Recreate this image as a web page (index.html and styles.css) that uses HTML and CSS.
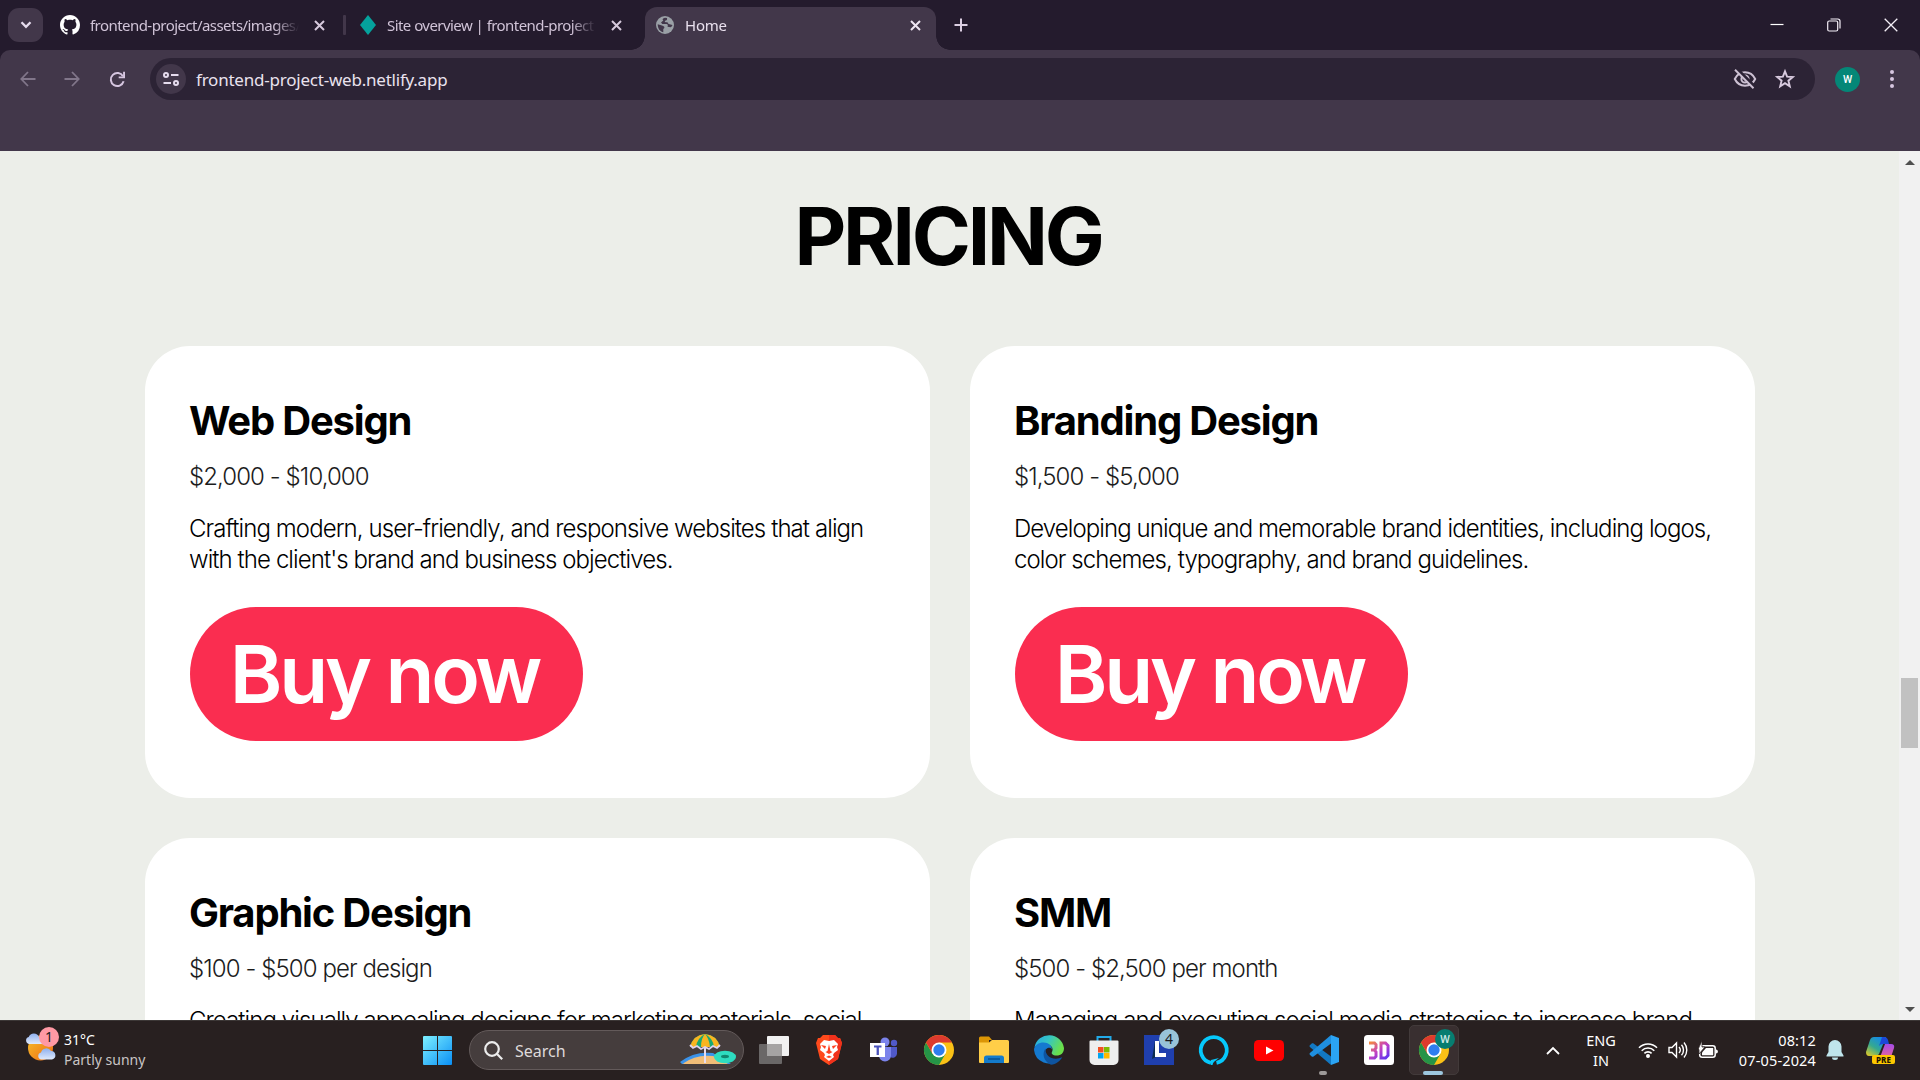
FILE: index.html
```html
<!DOCTYPE html>
<html lang="en">
<head>
<meta charset="utf-8">
<title>Home</title>
<link rel="stylesheet" href="styles.css">
</head>
<body>
<header class="tabstrip">
  <button class="tab-search"><svg width="12" height="8" viewBox="0 0 12 8"><path d="M1.5 1.2 6 5.8l4.500-4.600" fill="none" stroke="#e6dcee" stroke-width="2.300"/></svg></button>
  <div class="tab tab-one">
    <svg class="favicon" width="20" height="20" viewBox="0 0 16 16"><path fill="#fff" d="M8 0C3.580 0 0 3.580 0 8c0 3.540 2.290 6.530 5.470 7.590.4.070.55-.17.55-.38 0-.19-.01-.82-.01-1.490-2.010.37-2.530-.49-2.690-.94-.09-.23-.48-.94-.82-1.130-.28-.15-.68-.52-.01-.53.63-.01 1.080.58 1.230.82.72 1.210 1.870.87 2.330.66.07-.52.28-.87.51-1.070-1.780-.2-3.640-.89-3.640-3.950 0-.87.31-1.590.82-2.150-.08-.2-.36-1.020.08-2.120 0 0 .67-.21 2.200.82.64-.18 1.320-.27 2-.27s1.360.09 2 .27c1.530-1.040 2.200-.82 2.200-.82.44 1.100.16 1.920.08 2.120.51.56.82 1.270.82 2.150 0 3.070-1.870 3.750-3.650 3.950.29.25.54.73.54 1.480 0 1.070-.01 1.930-.01 2.200 0 .21.15.46.55.38A8.010 8.010 0 0 0 16 8c0-4.420-3.580-8-8-8Z"/></svg>
    <span class="tab-label">frontend-project/assets/images/</span>
    <svg class="close" width="11" height="11" viewBox="0 0 11 11"><path d="m1 1 9 9m0-9-9 9"/></svg>
  </div>
  <i class="tab-divider"></i>
  <div class="tab tab-two">
    <svg class="favicon" width="20" height="20" viewBox="0 0 20 20"><path fill="#05a29c" d="m10 0 8 10-8 10L2 10Z"/></svg>
    <span class="tab-label">Site overview | frontend-project</span>
    <svg class="close" width="11" height="11" viewBox="0 0 11 11"><path d="m1 1 9 9m0-9-9 9"/></svg>
  </div>
  <div class="tab tab-active">
    <svg class="favicon" width="18" height="18" viewBox="0 0 18 18"><circle cx="9" cy="9" r="9" fill="#9aa0a6"/><path fill="#42374a" d="M1.700 8.200 6 9.500c1.800.4 2.600 1.200 2.300 2.500l-1 1.100v3.200C4 15.500 1.700 12.600 1.700 8.200ZM9 1.700C6.600 2.300 6 3.500 7.300 4.600L5 6.500l1.300 1.600h4.200c1.500 0 1.600 1.500 1 2.700l3.200.4c1-.5 1.500-1.300 1.700-2.200l-3.700-1c-1-.3-.4-1.700-1.700-1.700H9.500c-1.300-.5-.6-1.600.3-1.700 1.200-.2 1.500-1 1.200-2.600Z"/></svg>
    <span class="tab-label">Home</span>
    <svg class="close" width="11" height="11" viewBox="0 0 11 11"><path d="m1 1 9 9m0-9-9 9"/></svg>
  </div>
  <svg class="new-tab" width="14" height="14" viewBox="0 0 14 14"><path d="M7 .5v13M.5 7h13" stroke="#dccfe2" stroke-width="2"/></svg>
  <div class="window-controls">
    <svg width="14" height="14" viewBox="0 0 14 14"><path d="M.5 6.500h13" stroke="#fff" stroke-width="1.200"/></svg>
    <svg width="14" height="14" viewBox="0 0 14 14" fill="none" stroke="#f4eff7" stroke-width="1.200"><rect x=".7" y="3" width="10" height="10" rx="1.500"/><path d="M3.500 1h7.300a2.200 2.200 0 0 1 2.200 2.200v7.300"/></svg>
    <svg width="14" height="14" viewBox="0 0 14 14"><path d="m.7.7 12.600 12.600m0-12.600L.7 13.300" stroke="#f4eff7" stroke-width="1.300"/></svg>
  </div>
</header>

<nav class="toolbar">
  <div class="toolbar-row">
    <svg class="nav-back" width="16" height="16" viewBox="0 0 16 16"><path d="M15.500 8H1.500M8 1 1.300 8 8 15" fill="none" stroke="#81768a" stroke-width="1.800"/></svg>
    <svg class="nav-forward" width="16" height="16" viewBox="0 0 16 16"><path d="M.5 8h14M8 1l6.700 7L8 15" fill="none" stroke="#81768a" stroke-width="1.800"/></svg>
    <svg class="nav-reload" width="17" height="17" viewBox="0 0 17 17"><path d="M14.600 10.300A6.500 6.500 0 1 1 14 5.300" fill="none" stroke="#d6c6e0" stroke-width="2"/><path d="M16 .8v6.400H9.700V5.400h4.400V.8Z" fill="#d6c6e0"/></svg>
    <div class="omnibox">
      <span class="site-info"><svg width="16" height="14" viewBox="0 0 16 14" fill="none" stroke="#e6dcee" stroke-width="2"><circle cx="3" cy="3" r="2"/><path d="M8 3h7.500M.5 11H8"/><circle cx="13" cy="11" r="2"/></svg></span>
      <span class="url">frontend-project-web.netlify.app</span>
      <svg class="eye" width="24" height="22" viewBox="0 0 24 22" fill="none" stroke="#cdc1d3" stroke-width="2"><path d="M1.800 11C4 6.500 7.500 4.300 12 4.300s8 2.200 10.200 6.700c-2.200 4.500-5.700 6.700-10.200 6.700S4 15.500 1.800 11Z"/><circle cx="12" cy="11" r="3.600"/><path d="M4 .8 22.500 19.300" stroke="#2c2335" stroke-width="3"/><path d="m2 1.700 18.500 18.500"/></svg>
      <svg class="star" width="20" height="20" viewBox="0 0 20 20"><path d="m10 2.300 2.100 5.300 5.700.4-4.400 3.700 1.400 5.600-4.800-3.100-4.800 3.100 1.400-5.600L2.200 8l5.700-.4Z" fill="none" stroke="#d8cade" stroke-width="1.900"/></svg>
    </div>
    <span class="profile">W</span>
    <svg class="kebab" width="4" height="18" viewBox="0 0 4 18" fill="#d6c6e0"><circle cx="2" cy="2" r="2"/><circle cx="2" cy="9" r="2"/><circle cx="2" cy="16" r="2"/></svg>
  </div>
</nav>

<div class="viewport">
  <main class="pricing">
    <h1 class="pricing-title">PRICING</h1>
    <section class="plans">
      <article class="plan">
        <h2 class="plan-name">Web Design</h2>
        <p class="plan-price">$2,000 - $10,000</p>
        <p class="plan-text">Crafting modern, user-friendly, and responsive websites that align<br>with the client's brand and business objectives.</p>
        <a class="buy">Buy now</a>
      </article>
      <article class="plan">
        <h2 class="plan-name">Branding Design</h2>
        <p class="plan-price">$1,500 - $5,000</p>
        <p class="plan-text">Developing unique and memorable brand identities, including logos,<br>color schemes, typography, and brand guidelines.</p>
        <a class="buy">Buy now</a>
      </article>
      <article class="plan">
        <h2 class="plan-name">Graphic Design</h2>
        <p class="plan-price">$100 - $500 per design</p>
        <p class="plan-text">Creating visually appealing designs for marketing materials, social</p>
      </article>
      <article class="plan">
        <h2 class="plan-name">SMM</h2>
        <p class="plan-price">$500 - $2,500 per month</p>
        <p class="plan-text">Managing and executing social media strategies to increase brand</p>
      </article>
    </section>
  </main>
  <aside class="scrollbar">
    <svg width="10" height="5" viewBox="0 0 10 5"><path d="M0 5 5 0l5 5Z" fill="#505050"/></svg>
    <i class="thumb"></i>
    <svg width="10" height="5" viewBox="0 0 10 5"><path d="m0 0 5 5 5-5Z" fill="#505050"/></svg>
  </aside>
</div>

<footer class="taskbar">
  <div class="weather">
    <div class="weather-icon">
      <svg width="32" height="30" viewBox="0 0 32 30"><defs><linearGradient id="sun" x1="0" y1="0" x2="1" y2="1"><stop offset="0" stop-color="#f6c02a"/><stop offset="1" stop-color="#ee6a14"/></linearGradient><linearGradient id="cloud" x1="0" y1="0" x2="0" y2="1"><stop offset="0" stop-color="#8fb0ee"/><stop offset="1" stop-color="#dfeafc"/></linearGradient></defs><circle cx="15.500" cy="15" r="12.500" fill="url(#sun)"/><path d="M4 11a3.600 3.600 0 0 1-.3-7A5.500 5.500 0 0 1 14 4l4 7Z" fill="url(#cloud)"/><path d="M16 26.500a3.600 3.600 0 0 1 0-7 5.500 5.500 0 0 1 10-1.500 4.300 4.300 0 0 1 1 8.500Z" fill="url(#cloud)"/></svg>
      <span class="badge weather-badge">1</span>
    </div>
    <div class="weather-text"><span class="temp">31°C</span><span class="cond">Partly sunny</span></div>
  </div>

  <div class="start">
    <svg width="29" height="29" viewBox="0 0 29 29"><defs><linearGradient id="win" x1="0" y1="0" x2="1" y2="1"><stop offset="0" stop-color="#7df0ff"/><stop offset="1" stop-color="#0a8ff5"/></linearGradient></defs><path d="M1 0h13v14H0V1a1 1 0 0 1 1-1Zm14 0h13a1 1 0 0 1 1 1v13H15ZM0 15h14v14H1a1 1 0 0 1-1-1Zm15 0h14v13a1 1 0 0 1-1 1H15Z" fill="url(#win)"/></svg>
  </div>
  <div class="search">
    <svg width="19" height="19" viewBox="0 0 19 19" fill="none" stroke="#ececec" stroke-width="2.200"><circle cx="8" cy="8" r="6.800"/><path d="m12.800 12.800 5.400 5.400"/></svg>
    <span class="search-label">Search</span>
    <svg class="beach" width="56" height="32" viewBox="0 0 56 32"><path d="M0 28Q14 17 33 19l18 11H2Z" fill="#3b93ea"/><path d="M3 29.500Q16 20 33 22l15 8H4Z" fill="#f0bd78"/><path d="M24 5h2v24h-2z" fill="#e6dced"/><path d="M10 13Q13 1 25 0q12 1 15 13Z" fill="#19a974"/><path d="M10 13Q13 1 25 0q-8 4-9 13Zm11 0Q21 4 25 0q4 4 5 13Zm19 0Q37 1 25 0q8 4 9 13Z" fill="#f9b520"/><path d="m10 11 3 3 4-2 4 3 4-2 4 2 4-3 4 2 3-3" fill="none" stroke="#ded3f0" stroke-width="1.800"/><ellipse cx="45" cy="23" rx="11" ry="6.200" fill="#2edcc0"/><ellipse cx="45" cy="22.500" rx="4" ry="1.700" fill="#11866f"/></svg>
  </div>

  <div class="apps">
    <div class="app"><svg width="30" height="30" viewBox="0 0 30 30"><rect x="8" y="1" width="22" height="20" rx="1" fill="#f1f1f1"/><rect y="9" width="23" height="20" rx="1" fill="#6a6767"/><rect x="8" y="9" width="15" height="12" fill="#a5a3a3"/></svg></div>
    <div class="app"><svg width="26" height="30" viewBox="0 0 26 30"><path d="m7 0-3 3H2L0 8l1 4 3 12 9 6 9-6 3-12 1-4-2-5h-2l-3-3Z" fill="#ff4a1c"/><path d="M13 0h6l3 3h2l2 5-1 4-3 12-9 6Z" fill="#f1311b"/><path d="m8 5 5 1 5-1 4 4-1 3 1 3-4 3-1 2 1 2-5 4-5-4 1-2-1-2-4-3 1-3-1-3Z" fill="#fff"/><path d="m5 10 5 1-1 3Zm16 0-5 1 1 3Zm-8-1 1.500 7 2 1-3.500 2-3.500-2 2-1ZM10 22l3-1.500 3 1.500-3 1Z" fill="#ff4120"/></svg></div>
    <div class="app"><svg width="28" height="26" viewBox="0 0 28 26"><circle cx="15" cy="5" r="4.500" fill="#7b83eb"/><circle cx="24" cy="6" r="3.200" fill="#5059c9"/><path d="M19 10h8v7a4.500 4.500 0 0 1-7 3Z" fill="#5059c9"/><path d="M9 10h12v8.500a6 6 0 0 1-12 0Z" fill="#7b83eb"/><path d="M0 6h15v14H0z" fill="#fff"/><path d="M4 8.500h7.500v2H8.900V18H6.600v-7.500H4Z" fill="#4b53bc"/></svg></div>
    <div class="app"><svg width="30" height="30" viewBox="0 0 30 30"><g id="chrome"><circle cx="15" cy="15" r="15" fill="#fbc116"/><path d="M2 7.500A15 15 0 0 0 15 30l6.500-11.300L8.500 18.700Z" fill="#259447"/><path d="M2 7.500A15 15 0 0 1 28 7.500H15L8.500 18.700Z" fill="#dd3a2e"/><circle cx="15" cy="15" r="7.500" fill="#fff"/><circle cx="15" cy="15" r="5.700" fill="#2f7def"/></g></svg></div>
    <div class="app"><svg width="30" height="28" viewBox="0 0 30 28"><path d="M0 2a1.500 1.500 0 0 1 1.500-1.500h8.500L13 4h-3v6H0Z" fill="#dc9605"/><path d="M0 6.500h10L13 4h15.500A1.500 1.500 0 0 1 30 5.500V26a1 1 0 0 1-1 1H1a1 1 0 0 1-1-1Z" fill="#ffce48"/><path d="M5 27v-5a2.500 2.500 0 0 1 2.500-2.500h15A2.500 2.500 0 0 1 25 22v5Z" fill="#147bcb"/><path d="M9 23h12" stroke="#07508f" stroke-width="1.500"/></svg></div>
    <div class="app"><svg width="30" height="30" viewBox="0 0 30 30"><defs><linearGradient id="edge" x1="0" y1="0" x2="1" y2=".4"><stop offset="0" stop-color="#25a7e6"/><stop offset=".5" stop-color="#36c6c2"/><stop offset="1" stop-color="#6ae04a"/></linearGradient></defs><path d="M.5 12A15 15 0 0 1 30 13c0 5-3 7.500-7.500 7.500-4 0-5.500-2-4.500-3.500 2-4-1-7.500-6-7.500S2 11 .5 12Z" fill="url(#edge)"/><path d="M0 15C0 10 5 7.500 9.500 7.500c5 0 8.500 3 8.500 7-1-3-7-2.500-7 3 0 6 6 9.500 14 7A15 15 0 0 1 0 15Z" fill="#1579cf"/><path d="M11.500 13.500C8 18 9 26 17 29.800c5-.5 9-3.500 11.200-7.500C20 26 11 22 11.500 13.500Z" fill="#0e54a0"/></svg></div>
    <div class="app"><svg width="30" height="30" viewBox="0 0 30 30"><path d="M8.500 6V2h13v4" fill="none" stroke="#22aae8" stroke-width="2"/><path d="M.5 6.500a1 1 0 0 1 1-1h27a1 1 0 0 1 1 1V25a5 5 0 0 1-5 5h-19a5 5 0 0 1-5-5Z" fill="#eee"/><path d="M9 12h5.500v5.500H9z" fill="#f25022"/><path d="M15 12h5.500v5.500H15z" fill="#7fba00"/><path d="M9 18h5.500v5.500H9z" fill="#00a4ef"/><path d="M15 18h5.500v5.500H15z" fill="#ffb900"/></svg></div>
    <div class="app"><svg width="30" height="30" viewBox="0 0 30 30"><path d="M0 0h30v30H0z" fill="#1f3fae"/><path d="m11 6-3 18 4-2Z" fill="#0c2d4e"/><path d="M11 6h4v12h7v4H11Z" fill="#fff"/></svg><span class="badge l-badge">4</span></div>
    <div class="app"><svg width="30" height="30" viewBox="0 0 30 30"><path d="M12 27.800A13 13 0 1 1 17.500 27.800" fill="none" stroke="#06c8fb" stroke-width="3.800"/><path d="M12 25v5h1.500C14 27 16 26 20 23l-4 1Z" fill="#06c8fb"/></svg></div>
    <div class="app"><svg width="30" height="21" viewBox="0 0 30 21"><rect width="30" height="21" rx="4.500" fill="#f00"/><path d="m12 6.500 7.500 4-7.500 4Z" fill="#fff"/></svg></div>
    <div class="app"><svg width="30" height="30" viewBox="0 0 30 30"><path d="M3 8.300.6 10.500v1.200L22 30v-8.500L4.200 8.300Z" fill="#1278c2"/><path d="M22 0v8.500L4.200 21.700H3L.6 19.500v-1.200Z" fill="#1f8fdf"/><path d="m22 0 8 3v24l-8 3Z" fill="#2ba4f4"/></svg><i class="running"></i></div>
    <div class="app"><svg width="30" height="30" viewBox="0 0 30 30"><defs><linearGradient id="three" x1="0" y1="0" x2="1" y2="1"><stop offset="0" stop-color="#f58a3c"/><stop offset=".5" stop-color="#c341c4"/><stop offset="1" stop-color="#5a35f2"/></linearGradient></defs><rect width="30" height="30" rx="3.500" fill="#fff"/><path d="M5 8h5.500l1.500 1.500V13l-1.500 2 1.500 2v4.500L10.500 23H5M7 15h3.500M17 8h4.500L24 10.500v10L21.500 23H17Z" fill="none" stroke="url(#three)" stroke-width="3"/></svg></div>
    <div class="app"><div class="app-tile"><svg width="30" height="30" viewBox="0 0 30 30"><use href="#chrome"/></svg></div><span class="badge w-badge">W</span><i class="running running-on"></i></div>
  </div>

  <div class="tray">
    <svg class="chevron" width="14" height="9" viewBox="0 0 14 9"><path d="m1 8 6-6 6 6" fill="none" stroke="#fff" stroke-width="1.800"/></svg>
    <div class="lang"><span>ENG</span><span>IN</span></div>
    <svg class="wifi" width="20" height="16" viewBox="0 0 20 16" fill="none" stroke="#fff" stroke-width="1.600"><path d="M1 5.800a12.500 12.500 0 0 1 18 0M3.700 8.700a8.800 8.800 0 0 1 12.600 0M6.400 11.400a5 5 0 0 1 7.200 0"/><circle cx="10" cy="14" r="1.200" fill="#fff"/></svg>
    <svg class="volume" width="20" height="18" viewBox="0 0 20 18" fill="none" stroke="#fff" stroke-width="1.400"><path d="M1 6.500h3L8.500 2v14L4 11.500H1ZM11 6a4.500 4.500 0 0 1 0 6M13.500 3.700a8 8 0 0 1 0 10.600M16 1.500a11.500 11.500 0 0 1 0 15"/></svg>
    <svg class="battery" width="21" height="18" viewBox="0 0 21 18"><rect x="1.700" y="4.700" width="15.500" height="11.600" rx="2.500" fill="none" stroke="#fff" stroke-width="1.500"/><path d="M4 11.500 8 7h7.200v7.300H4Z" fill="#fff"/><path d="M18 8.500c2.500 0 2.500 4 0 4Z" fill="#fff"/><path d="M4-.5v6.500H7L1 13V8.500H0Z" fill="#fff" stroke="#282020" stroke-width=".8"/></svg>
    <div class="clock"><span>08:12</span><span>07-05-2024</span></div>
    <svg class="bell" width="18" height="20" viewBox="0 0 18 20" fill="#bfe5ec"><path d="M9 0a6.500 6.500 0 0 1 6.500 6.500v5.500l2 3.500v1H.5v-1l2-3.500V6.500A6.500 6.500 0 0 1 9 0ZM6 17.500h6a3 2.500 0 0 1-6 0Z"/></svg>
    <div class="copilot">
      <svg width="30" height="27" viewBox="0 0 30 27"><defs><linearGradient id="cpa" x1=".7" y1="0" x2="0" y2="1"><stop offset="0" stop-color="#1389ea"/><stop offset=".5" stop-color="#35a98f"/><stop offset="1" stop-color="#f2ce1d"/></linearGradient><linearGradient id="cpb" x1="0" y1="0" x2="0" y2="1"><stop offset="0" stop-color="#a44be8"/><stop offset="1" stop-color="#f2698b"/></linearGradient></defs><path d="M8 0h12l-7 17q-1 2-4 2H3q-3 0-3-4L4 3q1-3 4-3Z" fill="url(#cpa)"/><path d="M16 0h2q3 0 4 3l1 4h-6q-3 0-4 2Z" fill="#1b48d8"/><path d="M19 7h6q4 0 3 4l-3 9q-1 3-4 3h-8Z" fill="url(#cpb)"/></svg>
      <span class="pre">PRE</span>
    </div>
  </div>
</footer>
</body>
</html>
```
FILE: styles.css
```css
* { box-sizing: border-box; }
html, body { height: 100%; }
body {
  margin: 0;
  display: flex;
  flex-direction: column;
  overflow: hidden;
  background: #241b2d;
  font-family: "Noto Sans", "Open Sans", sans-serif;
}
svg { display: block; flex: none; overflow: visible; }
h1, h2, p { margin: 0; }

/* Tab strip */
.tabstrip { display: flex; align-items: center; height: 50px; flex: none; padding-left: 8px; }
.tab-search {
  width: 35px; height: 34px; border: 0; border-radius: 11px; background: #42374a;
  display: flex; align-items: center; justify-content: center; padding: 0;
}
.tab { display: flex; align-items: center; height: 43px; margin-top: 7px; padding-bottom: 7px; color: #d0c3d7; }
.tab-one { width: 301px; padding-left: 17px; }
.tab-two { width: 300px; padding-left: 12px; }
.tab-divider { width: 3px; height: 20px; margin-left: -1px; background: #42374a; border-radius: 1px; }
.tab-label {
  flex: none; width: 209px; margin-left: 10px; overflow: hidden; white-space: nowrap;
  font-size: 15px; line-height: 24px; letter-spacing: -0.55px;
  mask-image: linear-gradient(90deg, #000 88%, transparent);
}
.tab-two .tab-label { margin-left: 9px; }
.close { margin-left: 15px; fill: none; stroke: #d6c9dc; stroke-width: 2; }
.tab-active {
  position: relative; width: 291px; padding-left: 11px; margin-left: -1px;
  background: #42374a; border-radius: 12px 12px 0 0; color: #e9e0ee;
}
.tab-active::before, .tab-active::after {
  content: ""; position: absolute; bottom: 0; width: 14px; height: 14px;
}
.tab-active::before { left: -14px; background: radial-gradient(circle at 0 0, transparent 13.5px, #42374a 14px); }
.tab-active::after { right: -14px; background: radial-gradient(circle at 100% 0, transparent 13.5px, #42374a 14px); }
.tab-active .tab-label { margin-left: 11px; letter-spacing: -0.2px; }
.tab-active .close { margin-left: 16px; stroke: #efe6f3; }
.new-tab { margin-left: 18px; }
.window-controls { display: flex; gap: 43px; margin: 0 22px 0 auto; }

/* Toolbar */
.toolbar { height: 101px; flex: none; background: #42374a; border-radius: 10px 10px 0 0; padding-top: 8px; }
.toolbar-row { display: flex; align-items: center; height: 42px; }
.nav-back { margin-left: 20px; }
.nav-forward { margin-left: 28px; }
.nav-reload { margin-left: 29px; }
.omnibox {
  display: flex; align-items: center; width: 1665px; height: 42px; margin-left: 24px;
  padding-left: 6px; border-radius: 21px; background: #2c2335;
}
.site-info {
  width: 30px; height: 30px; border-radius: 50%; background: #42374a;
  display: flex; align-items: center; justify-content: center;
}
.url { margin-left: 10px; font-size: 17px; letter-spacing: -0.22px; color: #e9e2ee; }
.eye { margin-left: auto; }
.star { margin: 0 20px 0 18px; }
.profile {
  width: 25px; height: 25px; margin-left: 20px; border-radius: 50%; background: #048777;
  color: #fff; font: 500 10.5px/25px Roboto, sans-serif; text-align: center;
}
.kebab { margin-left: 30px; }

/* Page */
.viewport { display: flex; flex: 1; min-height: 0; background: #eceee9; font-family: Inter, sans-serif; color: #000; }
.pricing { flex: 1; overflow: hidden; padding: 36px 144px 0 145px; }
.pricing-title { height: 97px; margin-bottom: 62px; padding-right: 4px; font-size: 80px; line-height: 97px; font-weight: 700; letter-spacing: -3.2px; text-align: center; }
.plans { display: grid; grid-template-columns: 785px 785px; grid-auto-rows: 452px; gap: 40px; }
.plan { padding: 51px 45px 0 44px; border-radius: 45px; background: #fff; letter-spacing: -0.92px; }
.plan-name { height: 48px; font-size: 40px; line-height: 48px; font-weight: 700; letter-spacing: -1.2px; }
.plan-price { margin-top: 16px; font-size: 24px; line-height: 32px; font-weight: 300; color: #1c1c1c; }
.plan-text { margin-top: 20px; font-size: 24px; line-height: 31.2px; font-weight: 300; white-space: nowrap; }
.buy {
  display: flex; align-items: center; justify-content: center; width: 393px; height: 134px; margin: 31.6px 0 0 1px; padding: 0 4px 2px 0;
  border-radius: 67px; background: #fa2d50; color: #fff; font-size: 80px; font-weight: 600; letter-spacing: -3.3px;
}
.scrollbar { width: 21px; flex: none; display: flex; flex-direction: column; align-items: center; background: #f1f1f1; padding: 9px 0 8px; }
.thumb { width: 17px; height: 70px; margin: 513px 0 auto; background: #c1c1c1; }

/* Taskbar */
.taskbar { display: flex; height: 60px; flex: none; background: #282020; border-top: 1px solid #3c3736; color: #fff; }
.weather { display: flex; width: 410px; padding: 12px 0 0 25px; }
.weather-icon { position: relative; width: 32px; height: 30px; }
.badge { position: absolute; border-radius: 50%; width: 20px; height: 20px; font-size: 14px; line-height: 20px; text-align: center; color: #1b1b1b; }
.weather-badge { left: 14px; top: -6px; background: #ff99a4; }
.weather-text { display: flex; flex-direction: column; margin: -3px 0 0 7px; font-size: 14px; line-height: 20px; }
.cond { color: #c9c5c5; }
.start { width: 55px; display: flex; align-items: center; justify-content: center; }
.search {
  display: flex; align-items: center; width: 275px; height: 40px; margin: 9px 2px 0 4px; padding-left: 14px;
  border: 1px solid #635a5a; border-radius: 20px; background: #453d3d;
}
.search-label { margin-left: 12px; padding-top: 1px; font-size: 16px; color: #dedada; }
.beach { margin-left: auto; margin-right: 7px; }
.apps { display: flex; width: 715px; }
.app { position: relative; width: 55px; display: flex; align-items: center; justify-content: center; padding-bottom: 1px; }
.app-tile { width: 50px; height: 50px; border: 1px solid #423a3a; border-radius: 5px; background: #392f30; display: flex; align-items: center; justify-content: center; }
.l-badge { left: 28px; top: 8px; background: #98c3d8; }
.w-badge { left: 29px; top: 8px; background: #067d70; color: #cfe9e5; font-size: 10px; font-weight: 600; }
.running { position: absolute; left: 23px; bottom: 5px; width: 8px; height: 4px; border-radius: 2px; background: #9d9998; }
.running-on { left: 17px; width: 20px; background: #9cc6de; }
.tray { display: flex; align-items: center; margin-left: auto; padding-bottom: 1px; font-size: 14.500px; line-height: 20px; }
.lang { width: 40px; margin-left: 21px; display: flex; flex-direction: column; align-items: center; }
.wifi { margin-left: 17px; }
.volume { margin-left: 10px; }
.battery { margin-left: 10px; }
.clock { width: 90px; margin-left: 7px; display: flex; flex-direction: column; align-items: flex-end; white-space: nowrap; letter-spacing: 0.15px; }
.bell { margin-left: 10px; }
.copilot { position: relative; margin: 0 24px 0 22px; }
.pre { position: absolute; left: 6px; top: 18px; width: 23px; height: 9px; border-radius: 2px; background: #fdc800; color: #1b1400; font-size: 8px; line-height: 9px; font-weight: 800; text-align: center; }
```
